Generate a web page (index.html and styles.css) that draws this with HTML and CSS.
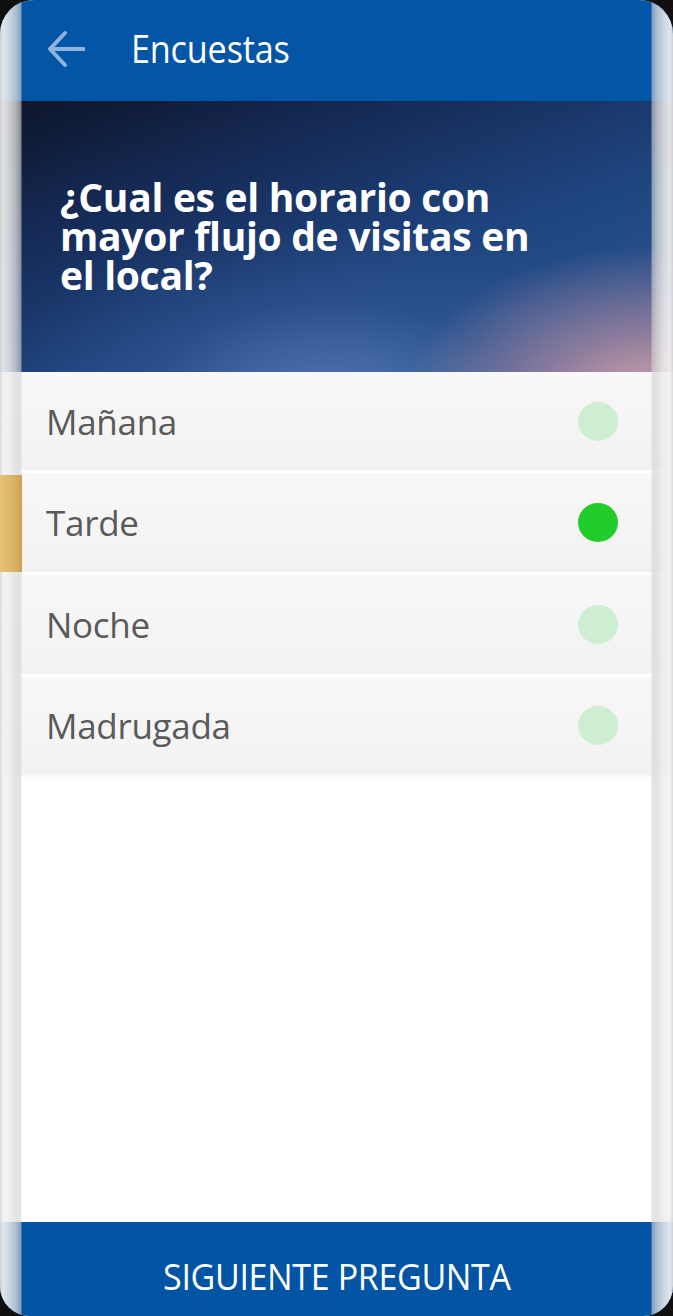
FILE: index.html
```html
<!DOCTYPE html>
<html lang="es">
<head>
<meta charset="utf-8">
<title>Encuestas</title>
<link rel="stylesheet" href="styles.css">
</head>
<body>
<div class="screen">
  <header class="appbar">
    <svg class="back" viewBox="0 0 40 40" width="40" height="40" aria-hidden="true">
      <path d="M20 4 L5 20 L20 36 M5 20 H39" fill="none" stroke="#8fb3dd" stroke-width="4" stroke-linecap="round" stroke-linejoin="round"/>
    </svg>
    <span class="title">Encuestas</span>
  </header>
  <section class="hero">
    <h1 class="question">¿Cual es el horario con mayor flujo de visitas en el local?</h1>
  </section>
  <ul class="options">
    <li class="option"><span class="label">Mañana</span><span class="dot"></span></li>
    <li class="option selected"><span class="label">Tarde</span><span class="dot"></span></li>
    <li class="option"><span class="label">Noche</span><span class="dot"></span></li>
    <li class="option"><span class="label">Madrugada</span><span class="dot"></span></li>
  </ul>
  <div class="spacer"></div>
  <footer class="next"><span class="next-text">SIGUIENTE PREGUNTA</span></footer>
  <div class="edge edge-left"></div>
  <div class="edge edge-right"></div>
</div>
</body>
</html>
```
FILE: styles.css
```css
* { box-sizing: border-box; }
html, body { margin: 0; padding: 0; background: #101010; }
body { width: 673px; height: 1316px; overflow: hidden; font-family: "Open Sans", "Noto Sans", sans-serif; }

.screen {
  position: relative;
  width: 673px;
  height: 1316px;
  display: flex;
  flex-direction: column;
  background: #ffffff;
  border-radius: 34px 34px 30px 30px;
  overflow: hidden;
}

.appbar {
  height: 101px;
  flex: 0 0 101px;
  background: #0356a6;
  display: flex;
  align-items: center;
  padding: 0 0 5px 45px;
}
.back { flex: 0 0 40px; margin-top: 2px; }
.title {
  margin-left: 46px;
  color: #ffffff;
  font-size: 38px;
  display: inline-block;
  transform: scaleX(0.9);
  transform-origin: left center;
  letter-spacing: -0.2px;
}

.hero {
  flex: 0 0 271px;
  height: 271px;
  padding: 76px 112px 0 60px;
  background:
    radial-gradient(ellipse 250px 160px at 655px 305px, rgba(225,170,172,0.98) 0%, rgba(195,145,162,0.65) 45%, rgba(150,120,160,0) 100%),
    radial-gradient(ellipse 330px 170px at 330px 295px, rgba(90,125,180,0.85) 0%, rgba(60,95,155,0.35) 55%, rgba(40,80,140,0) 100%),
    linear-gradient(160deg, #0c1529 0%, #162c59 30%, #1f4580 60%, #2c5a97 100%);
}
.question {
  margin: 0;
  color: #ffffff;
  font-weight: 700;
  font-size: 39px;
  line-height: 39px;
  letter-spacing: -0.3px;
}

.options {
  list-style: none;
  margin: 0;
  padding: 0;
  display: flex;
  flex-direction: column;
  gap: 3px;
}
.option {
  position: relative;
  height: 99px;
  display: flex;
  align-items: center;
  justify-content: space-between;
  padding: 0 55px 0 46px;
  background: linear-gradient(#f8f8f8, #f2f2f2);
}
.option:last-child { height: 97px; box-shadow: 0 2px 3px rgba(0,0,0,0.05); }
.option:first-child { height: 98px; }
.label {
  color: #5a5a5a;
  font-size: 35px;
  letter-spacing: -0.3px;
}
.dot {
  width: 40px;
  height: 39px;
  border-radius: 50%;
  background: #cdeed0;
}
.selected .dot { background: #22cc2a; }
.selected::before {
  content: "";
  position: absolute;
  left: 0; top: 2px; bottom: 0;
  width: 22px;
  background: linear-gradient(to right, #e6c27a, #d8b061 70%, #c9a14e);
  z-index: 3;
}

.spacer { flex: 1 1 auto; }

.next {
  flex: 0 0 94px;
  height: 94px;
  background: #0254a4;
  display: flex;
  align-items: center;
  justify-content: center;
  padding-top: 12px;
}
.next-text {
  color: #ffffff;
  font-size: 37px;
  display: inline-block;
  transform: scaleX(0.92);
  letter-spacing: -0.4px;
}

.edge {
  position: absolute;
  top: 0;
  bottom: 0;
  width: 22px;
  z-index: 2;
  pointer-events: none;
}
.edge-left {
  left: 0;
  background: linear-gradient(to right, rgba(215,215,215,0.95) 0px, rgba(242,242,242,0.92) 3px, rgba(238,238,238,0.85) 9px, rgba(220,220,220,0.78) 16px, rgba(210,210,210,0.6) 21px, rgba(210,210,210,0) 22px);
}
.edge-right {
  right: 0;
  background: linear-gradient(to left, rgba(215,215,215,0.95) 0px, rgba(242,242,242,0.92) 3px, rgba(238,238,238,0.85) 9px, rgba(220,220,220,0.78) 16px, rgba(210,210,210,0.6) 21px, rgba(210,210,210,0) 22px);
}
```
